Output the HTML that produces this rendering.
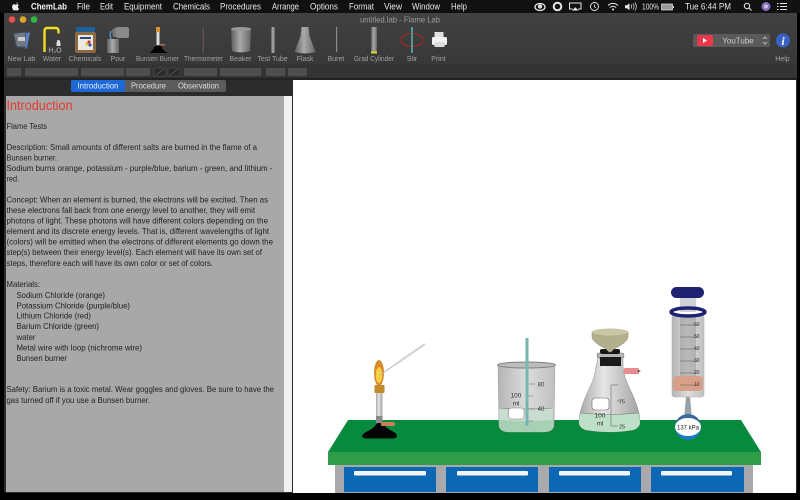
<!DOCTYPE html>
<html><head><meta charset="utf-8"><style>
html,body{margin:0;padding:0;background:#000;width:800px;height:500px;overflow:hidden}
svg{display:block;font-family:"Liberation Sans",sans-serif;filter:blur(.3px)}
.m{font-size:9px;fill:#e8e8e8}
.t{font-size:7px;fill:#a0a0a0;text-anchor:middle}
.b{font-size:8.7px;fill:#222}
.s{font-size:6px;fill:#333}
</style></head><body>
<svg width="800" height="500" viewBox="0 0 800 500" xmlns="http://www.w3.org/2000/svg">
<defs>
<linearGradient id="tb" x1="0" y1="0" x2="0" y2="1"><stop offset="0" stop-color="#414141"/><stop offset="1" stop-color="#383838"/></linearGradient>
<linearGradient id="cyl" x1="0" y1="0" x2="1" y2="0"><stop offset="0" stop-color="#5e5e5e"/><stop offset=".45" stop-color="#aaa"/><stop offset="1" stop-color="#666"/></linearGradient>
<linearGradient id="gl" x1="0" y1="0" x2="1" y2="0"><stop offset="0" stop-color="#a8a8a8"/><stop offset=".4" stop-color="#e6e6e6"/><stop offset="1" stop-color="#a2a2a2"/></linearGradient>
<linearGradient id="bk" x1="0" y1="0" x2="1" y2="0"><stop offset="0" stop-color="#b5b5b5"/><stop offset=".5" stop-color="#dcdcdc"/><stop offset="1" stop-color="#c0c0c0"/></linearGradient>
</defs>
<rect width="800" height="500" fill="#000"/>
<!-- menu bar -->
<rect width="800" height="13" fill="#111"/>
<path d="M18.700 9.300c-.6 1-1.100 1.300-1.600 1.300-.5 0-.8-.3-1.400-.3-.6 0-.9.300-1.400.3-1 0-2.200-2-2.200-3.700 0-1.700 1-2.600 2.100-2.600.6 0 1.100.400 1.500.400.400 0 .9-.4 1.600-.4.600 0 1.200.3 1.600.8-1.400.8-1.200 2.800.2 3.400zM16.400 3.900c-.1-.8.600-1.600 1.400-1.700.1.900-.7 1.700-1.400 1.700z" fill="#eee"/>
<text x="31" y="9.700" class="m" style="font-weight:700;fill:#f5f5f5" textLength="36" lengthAdjust="spacingAndGlyphs">ChemLab</text>
<text x="77" y="9.700" class="m" textLength="13" lengthAdjust="spacingAndGlyphs">File</text>
<text x="100" y="9.700" class="m" textLength="13" lengthAdjust="spacingAndGlyphs">Edit</text>
<text x="124" y="9.700" class="m" textLength="38" lengthAdjust="spacingAndGlyphs">Equipment</text>
<text x="173" y="9.700" class="m" textLength="37" lengthAdjust="spacingAndGlyphs">Chemicals</text>
<text x="220" y="9.700" class="m" textLength="41" lengthAdjust="spacingAndGlyphs">Procedures</text>
<text x="272" y="9.700" class="m" textLength="27" lengthAdjust="spacingAndGlyphs">Arrange</text>
<text x="310" y="9.700" class="m" textLength="28" lengthAdjust="spacingAndGlyphs">Options</text>
<text x="349" y="9.700" class="m" textLength="25" lengthAdjust="spacingAndGlyphs">Format</text>
<text x="384" y="9.700" class="m" textLength="18" lengthAdjust="spacingAndGlyphs">View</text>
<text x="412" y="9.700" class="m" textLength="28" lengthAdjust="spacingAndGlyphs">Window</text>
<text x="451" y="9.700" class="m" textLength="16" lengthAdjust="spacingAndGlyphs">Help</text>
<!-- menu extras -->
<g fill="none" stroke="#e8e8e8">
<ellipse cx="540" cy="7" rx="5" ry="3.500" stroke-width="1.300"/><circle cx="540" cy="6.500" r="2.200" fill="#ddd" stroke="none"/>
<circle cx="557.500" cy="6.500" r="3.800" stroke-width="2"/>
<path d="M572.500 9h-3V3h11.500v6h-3" stroke-width="1"/><path d="M572 10.500l3.300-3.300 3.300 3.300z" fill="#e8e8e8" stroke="none"/>
<circle cx="594.500" cy="6.500" r="4" stroke-width=".9"/><path d="M594.500 4.500v2.300l1.500 1" stroke-width=".8"/>
<path d="M608 5.500c3-2.800 7-2.800 10 0M610 7.500c2-1.700 4-1.700 6 0" stroke-width="1"/><circle cx="613" cy="9.500" r="1" fill="#e8e8e8" stroke="none"/>
<path d="M625 5.200h2l2.500-2v7l-2.500-2h-2z" fill="#e8e8e8" stroke="none"/><path d="M631 4.500q1.300 2 0 4M633 3.500q2 3 0 6M635 2.500q2.700 4 0 8" stroke-width=".7"/>
<rect x="661.500" y="4" width="11" height="6" stroke-width=".7" fill="#999"/>
<rect x="673" y="6" width="1" height="2" fill="#ddd" stroke="none"/>
<circle cx="747" cy="6" r="2.700" stroke-width="1"/><path d="M749 8l2.500 2.500" stroke-width="1.100"/>
<path d="M777 3.500h1.500M780 3.500h7M777 6.500h1.500M780 6.500h7M777 9.500h1.500M780 9.500h7" stroke-width="1"/>
</g>
<circle cx="766" cy="6.500" r="4.500" fill="#7d72c0"/><circle cx="766" cy="6.500" r="2" fill="#d8bcd8"/>
<text x="642" y="9.500" class="m" style="font-size:8px" textLength="17" lengthAdjust="spacingAndGlyphs">100%</text>
<text x="685" y="9.700" class="m" textLength="46" lengthAdjust="spacingAndGlyphs">Tue 6:44 PM</text>
<!-- window -->
<rect x="4" y="13" width="793" height="480" rx="3" fill="#2c2c2c"/>
<rect x="4" y="13" width="793" height="51" fill="url(#tb)"/>
<rect x="4" y="64" width="793" height="14" fill="#343434"/>
<rect x="4" y="78" width="793" height="1.500" fill="#1d1d1d"/>
<circle cx="12" cy="19.500" r="3.300" fill="#f0504a"/><circle cx="23" cy="19.500" r="3.300" fill="#e0a524"/><circle cx="34" cy="19.500" r="3.300" fill="#30b840"/>
<text x="360" y="22.500" style="font-size:8px;fill:#9a9a9a" textLength="80" lengthAdjust="spacingAndGlyphs">untitled.lab - Flame Lab</text>
<!-- new lab -->
<path d="M13 33l12-2 5 1-3 17-11-2z" fill="#3e4a63"/><path d="M14 34l11-1.500 1 14-9 0z" fill="#757a82"/><rect x="18" y="37" width="7" height="4" fill="#c8ccd2"/><path d="M26 33l4-.5-3 15-1.500 1.500z" fill="#5a80c8"/>
<!-- water -->
<path d="M44.500 52V30.500a2.500 2.500 0 0 1 2.500-2.500h9a2.500 2.500 0 0 1 2.500 2.500v3" fill="none" stroke="#f0e020" stroke-width="2.400"/>
<path d="M57.500 40h2l1 3v3h-4v-3z" fill="#ddd"/>
<text x="55" y="52.500" style="font-size:7px;fill:#bbb;text-anchor:middle">H₂O</text>
<!-- chemicals -->
<rect x="76" y="27" width="19" height="6" rx="1" fill="#1f5f95"/><rect x="75" y="32" width="21" height="21" rx="2" fill="#8a6a44"/><rect x="78" y="35" width="15" height="15" fill="#eae8e0"/><rect x="80" y="37" width="11" height="2" fill="#2c4a80"/><path d="M87 42l2-2 2 2-2 2z" fill="#d03030"/><path d="M85 44l2-2 2 2-2 2z" fill="#e0c020"/><path d="M88 45l2-2 2 2-2 2z" fill="#3050b0"/>
<!-- pour -->
<rect x="107" y="39" width="12" height="14" rx="1" fill="url(#cyl)"/>
<rect x="116" y="27" width="13" height="11" rx="2" fill="#8a8a8a"/><path d="M112 30l4-3v10h-3z" fill="#777"/><path d="M111 31q-1.500 4 0 8" stroke="#5590c0" stroke-width="1.500" fill="none"/>
<!-- burner -->
<rect x="156" y="27" width="4" height="5" fill="#d89030"/><rect x="156.500" y="32" width="3" height="13" fill="#dcdcdc"/><path d="M149 53q3-1 6-7h6q3 6 7 7z" fill="#050505"/><rect x="160" y="44" width="5" height="1.500" fill="#b56a45"/>
<!-- thermometer -->
<rect x="202.700" y="27" width="1" height="26" fill="#725a5a"/>
<!-- beaker -->
<path d="M231 29q10-2 20 0l-1 22q-9 3-18 0z" fill="url(#cyl)"/><ellipse cx="241" cy="29" rx="10" ry="2" fill="#999"/>
<!-- test tube -->
<rect x="271" y="27" width="4" height="26" rx="1.500" fill="url(#cyl)"/>
<!-- flask -->
<path d="M301.500 27h7l1 9 6 16q-10.500 3-21 0l6-16z" fill="url(#cyl)"/>
<!-- buret -->
<rect x="336" y="27" width="1.200" height="25" fill="#888"/>
<!-- grad cyl -->
<rect x="371" y="27" width="6" height="25" fill="url(#cyl)"/><rect x="371" y="51.500" width="6" height="2" fill="#e0d820"/>
<!-- stir -->
<ellipse cx="412" cy="40" rx="11" ry="6.500" fill="none" stroke="#b0242c" stroke-width="1"/><rect x="411" y="27" width="2" height="26" fill="#4d9a94"/>
<!-- print -->
<rect x="434.500" y="32" width="9" height="6" fill="#e2e2e2"/><rect x="432" y="37" width="15" height="8" rx="1.500" fill="#f2f2f2"/><rect x="434.500" y="42" width="10" height="5" fill="#dcdcdc"/>
<!-- labels -->
<g>
<text x="21.500" y="61" class="t">New Lab</text><text x="52" y="61" class="t">Water</text><text x="85" y="61" class="t">Chemicals</text><text x="118" y="61" class="t">Pour</text><text x="157.500" y="61" class="t" textLength="43" lengthAdjust="spacingAndGlyphs">Bunsen Burner</text><text x="203.500" y="61" class="t" textLength="39" lengthAdjust="spacingAndGlyphs">Thermometer</text><text x="240.500" y="61" class="t">Beaker</text><text x="272.500" y="61" class="t">Test Tube</text><text x="305" y="61" class="t">Flask</text><text x="336" y="61" class="t">Buret</text><text x="374" y="61" class="t" textLength="40" lengthAdjust="spacingAndGlyphs">Grad Cylinder</text><text x="412" y="61" class="t">Stir</text><text x="438.500" y="61" class="t">Print</text><text x="782.500" y="61" class="t">Help</text>
</g>
<!-- youtube selector -->
<rect x="693" y="34" width="77" height="13" rx="2" fill="#5a5a5a"/>
<rect x="697" y="35" width="16" height="11" rx="2" fill="#e8384a"/><path d="M703 38l4 2.500-4 2.500z" fill="#fff"/>
<text x="738" y="43.500" style="font-size:8px;fill:#cfcfcf;text-anchor:middle">YouTube</text>
<path d="M763 39l2-2 2 2M763 42l2 2 2-2" fill="none" stroke="#ccc" stroke-width=".8"/>
<circle cx="783" cy="40.500" r="7" fill="#3a62c4"/><text x="783" y="45" style="font-size:12px;fill:#fff;text-anchor:middle;font-style:italic;font-weight:700;font-family:'Liberation Serif',serif">i</text>
<!-- format bar -->
<g fill="#4e4e4e">
<rect x="7" y="68" width="14" height="8" rx="1"/><rect x="25" y="68" width="53" height="8" rx="1"/><rect x="81" y="68" width="43" height="8" rx="1"/><rect x="126" y="68" width="24" height="8" rx="1"/>
<rect x="154" y="68" width="12" height="8" rx="1" fill="#2a2a2a" stroke="#555" stroke-width=".6"/><rect x="168" y="68" width="12" height="8" rx="1" fill="#2a2a2a" stroke="#555" stroke-width=".6"/>
<rect x="184" y="68" width="33" height="8" rx="1"/><rect x="220" y="68" width="41" height="8" rx="1"/><rect x="266" y="68" width="19" height="8" rx="1"/><rect x="288" y="68" width="19" height="8" rx="1"/>
</g>
<path d="M156 75l8-6M170 75l8-6" stroke="#666" stroke-width=".6"/>
<!-- tabs -->
<rect x="71" y="80" width="155" height="12" rx="2" fill="#5c5c5c"/>
<rect x="71" y="80" width="54" height="12" rx="2" fill="#1e68d8"/>
<text x="77.500" y="88.500" style="font-size:8px;fill:#e6eeff" textLength="41" lengthAdjust="spacingAndGlyphs">Introduction</text>
<text x="131" y="88.500" style="font-size:8px;fill:#dedede" textLength="35" lengthAdjust="spacingAndGlyphs">Procedure</text>
<text x="178" y="88.500" style="font-size:8px;fill:#dedede" textLength="41" lengthAdjust="spacingAndGlyphs">Observation</text>
<!-- left panel -->
<rect x="6" y="96" width="278" height="396" fill="#a8a8a8"/>
<rect x="284" y="96" width="8" height="396" fill="#f2f2f2"/>
<text x="6.500" y="110" style="font-size:13.500px;fill:#e63a30" textLength="66" lengthAdjust="spacingAndGlyphs">Introduction</text>
<g class="lines">
<text class="b" x="6.500" y="129" textLength="40.500" lengthAdjust="spacingAndGlyphs">Flame Tests</text>
<text class="b" x="6.500" y="150" textLength="250.500" lengthAdjust="spacingAndGlyphs">Description: Small amounts of different salts are burned in the flame of a</text>
<text class="b" x="6.500" y="160.500" textLength="50.500" lengthAdjust="spacingAndGlyphs">Bunsen burner.</text>
<text class="b" x="6.500" y="171" textLength="266" lengthAdjust="spacingAndGlyphs">Sodium burns orange, potassium - purple/blue, barium - green, and lithium -</text>
<text class="b" x="6.500" y="181.500" textLength="12.500" lengthAdjust="spacingAndGlyphs">red.</text>
<text class="b" x="6.500" y="202.500" textLength="261.500" lengthAdjust="spacingAndGlyphs">Concept: When an element is burned, the electrons will be excited. Then as</text>
<text class="b" x="6.500" y="213" textLength="248.500" lengthAdjust="spacingAndGlyphs">these electrons fall back from one energy level to another, they will emit</text>
<text class="b" x="6.500" y="223.500" textLength="261.500" lengthAdjust="spacingAndGlyphs">photons of light. These photons will have different colors depending on the</text>
<text class="b" x="6.500" y="234" textLength="262.500" lengthAdjust="spacingAndGlyphs">element and its discrete energy levels. That is, different wavelengths of light</text>
<text class="b" x="6.500" y="244.500" textLength="266.500" lengthAdjust="spacingAndGlyphs">(colors) will be emitted when the electrons of different elements go down the</text>
<text class="b" x="6.500" y="255" textLength="255.500" lengthAdjust="spacingAndGlyphs">step(s) between their energy level(s). Each element will have its own set of</text>
<text class="b" x="6.500" y="266" textLength="206.500" lengthAdjust="spacingAndGlyphs">steps, therefore each will have its own color or set of colors.</text>
<text class="b" x="6.500" y="287" textLength="33.500" lengthAdjust="spacingAndGlyphs">Materials:</text>
<text class="b" x="16.500" y="298" textLength="88.500" lengthAdjust="spacingAndGlyphs">Sodium Chloride (orange)</text>
<text class="b" x="16.500" y="308.500" textLength="113.500" lengthAdjust="spacingAndGlyphs">Potassium Chloride (purple/blue)</text>
<text class="b" x="16.500" y="318.500" textLength="74.500" lengthAdjust="spacingAndGlyphs">Lithium Chloride (red)</text>
<text class="b" x="16.500" y="329" textLength="82.500" lengthAdjust="spacingAndGlyphs">Barium Chloride (green)</text>
<text class="b" x="16.500" y="340" textLength="19" lengthAdjust="spacingAndGlyphs">water</text>
<text class="b" x="16.500" y="350.500" textLength="125.500" lengthAdjust="spacingAndGlyphs">Metal wire with loop (nichrome wire)</text>
<text class="b" x="16.500" y="361" textLength="50.500" lengthAdjust="spacingAndGlyphs">Bunsen burner</text>
<text class="b" x="6.500" y="392" textLength="267.500" lengthAdjust="spacingAndGlyphs">Safety: Barium is a toxic metal. Wear goggles and gloves. Be sure to have the</text>
<text class="b" x="6.500" y="403" textLength="143.500" lengthAdjust="spacingAndGlyphs">gas turned off if you use a Bunsen burner.</text>
</g>
<!-- canvas -->
<rect x="293" y="80" width="503" height="413" fill="#fff"/>
<!-- bench -->
<rect x="335" y="465" width="418" height="28" fill="#a9a9ab"/>
<rect x="344" y="467" width="92" height="25" fill="#0c68b4"/><rect x="446" y="467" width="92" height="25" fill="#0c68b4"/><rect x="549" y="467" width="92" height="25" fill="#0c68b4"/><rect x="651" y="467" width="93" height="25" fill="#0c68b4"/>
<rect x="354" y="471" width="72" height="4.500" rx="1" fill="#f4f4f4"/><rect x="457" y="471" width="71" height="4.500" rx="1" fill="#f4f4f4"/><rect x="559" y="471" width="71" height="4.500" rx="1" fill="#f4f4f4"/><rect x="661" y="471" width="71" height="4.500" rx="1" fill="#f4f4f4"/>
<path d="M348 420H741L761 452H328z" fill="#088a3e"/>
<rect x="328" y="452" width="433" height="13" fill="#2e9c48"/>
<!-- burner -->
<rect x="376" y="392" width="6.500" height="32" fill="url(#gl)"/>
<rect x="376" y="416" width="6.500" height="8" fill="#8a8a8a"/>
<path d="M362 436q1-3 8-6 4-2 7-7h6q3 5 7 7 7 3 7 6 0 2.500-5 2.500h-25q-5 0-5-2.500z" fill="#050505"/>
<rect x="381" y="422" width="14" height="4" rx="1.500" fill="#c87f5c"/>
<rect x="374.500" y="385" width="10" height="8" rx="1" fill="#c08a2c"/>
<ellipse cx="379" cy="373" rx="5" ry="13" fill="#d98a2a"/>
<ellipse cx="379" cy="375" rx="3.300" ry="8" fill="#f5d040"/>
<path d="M380 375L425 344" stroke="#b8b8b8" stroke-width="1"/>
<path d="M396 364L425 344" stroke="#d4d4d4" stroke-width="2.200"/>
<!-- beaker -->
<path d="M498 364q28-4 57 0l-1 62q-1 6-10 6h-35q-9 0-10-6z" fill="url(#bk)" stroke="#9a9a9a" stroke-width=".5"/>
<path d="M499 408q27 2 54 0l-.5 18q-1 6-10 6h-33q-9 0-10-6z" fill="#c8dccf"/>
<path d="M499 408q27 2 54 0" stroke="#777" stroke-width=".6" fill="none"/>
<path d="M499 420q27 2 54 0v6q-1 6-10 6h-34q-9 0-10-6z" fill="#a8d0b4"/>
<ellipse cx="526.500" cy="365" rx="29" ry="3" fill="#bdbdbd" stroke="#808080" stroke-width="1"/>
<rect x="508.500" y="408" width="15.500" height="11" rx="3" fill="#fff" stroke="#777" stroke-width=".5"/>
<g stroke="#666" stroke-width=".6"><path d="M527 384h8M527 396h6M527 409h8M527 421h6"/></g>
<rect x="525.500" y="338" width="3" height="88" fill="#7ab5b2"/>
<text x="516" y="397.500" style="font-size:6.500px;fill:#333;text-anchor:middle">100</text><text x="516" y="405.500" style="font-size:6.500px;fill:#333;text-anchor:middle">ml</text>
<text x="541" y="386.500" class="s" style="text-anchor:middle">80</text><text x="541" y="411" class="s" style="text-anchor:middle">40</text>
<!-- flask -->
<path d="M598 358h25v9q1 10 6 20 11 22 11 35 0 6-7 8-23 4-47 0-7-2-7-8 0-13 11-35 5-10 6-20z" fill="url(#gl)" stroke="#8c8c8c" stroke-width=".5"/>
<path d="M581 413q29 3 57 0 2 5 2 9 0 6-7 8-23 4-47 0-7-2-7-8 0-4 2-9z" fill="#bfe0c8"/>
<path d="M581 413q29 3 57 0" stroke="#777" stroke-width=".6" fill="none"/>
<rect x="597" y="353" width="27" height="5" rx="2" fill="#b5b5b5" stroke="#666" stroke-width=".5"/>
<rect x="600" y="357" width="21" height="9" fill="#1a1a1a"/>
<rect x="600" y="349" width="20" height="5" rx="2" fill="#161616"/>
<path d="M592 332q18-4 36 0v5q0 5-14 12l-3 3h-2l-3-3q-14-7-14-12z" fill="#b2b08c" stroke="#8e8d70" stroke-width=".5"/>
<ellipse cx="610" cy="332" rx="18" ry="3.500" fill="#c8c6a4"/>
<rect x="624" y="368" width="15" height="6" rx="1" fill="#e88c90"/><path d="M638 370l3 1-3 1z" fill="#333"/>
<rect x="592" y="398" width="17" height="12" rx="3" fill="#fff" stroke="#666" stroke-width=".6"/>
<g stroke="#555" stroke-width=".5" fill="none"><path d="M618 385h-7v41h7M617 401h4"/></g>
<text x="600" y="417.500" style="font-size:6.500px;fill:#333;text-anchor:middle">100</text><text x="600" y="425.500" style="font-size:6.500px;fill:#333;text-anchor:middle">ml</text>
<text x="619" y="403.500" class="s" style="font-size:5.500px">75</text><text x="619" y="428.500" class="s" style="font-size:5.500px">25</text>
<!-- syringe -->
<rect x="680" y="296" width="16" height="16" fill="#cfd2d6"/>
<path d="M672 316h32v78q0 3-3 3h-26q-3 0-3-3z" fill="url(#bk)" stroke="#aaa" stroke-width=".5"/>
<rect x="680" y="316" width="16" height="60" fill="#a0a0a2" opacity=".6"/>
<rect x="673" y="376" width="30" height="15" rx="4" fill="#d8a088"/>
<ellipse cx="688" cy="312" rx="17" ry="4" fill="none" stroke="#1e2270" stroke-width="3.500"/>
<rect x="671" y="287" width="33" height="11" rx="5.500" fill="#1e2270"/>
<g stroke="#555" stroke-width=".5"><path d="M680 325h18M680 337h18M680 349h18M680 361h18M680 373h18M680 385h18"/></g>
<g class="s" style="font-size:5px"><text x="694" y="326">60</text><text x="694" y="338">50</text><text x="694" y="350">40</text><text x="694" y="362">30</text><text x="694" y="374">20</text><text x="694" y="386">10</text></g>
<path d="M686 397h4l1.500 17h-7z" fill="#9aa0a4"/>
<circle cx="688" cy="427" r="13" fill="#1d7cc0"/><path d="M675 427a13 13 0 0 1 26 0" fill="#3a6a9a"/>
<ellipse cx="688" cy="427" rx="13" ry="9" fill="#fff"/>
<text x="688" y="429.500" style="font-size:6px;fill:#222;text-anchor:middle">137 kPa</text>
</svg>
</body></html>
